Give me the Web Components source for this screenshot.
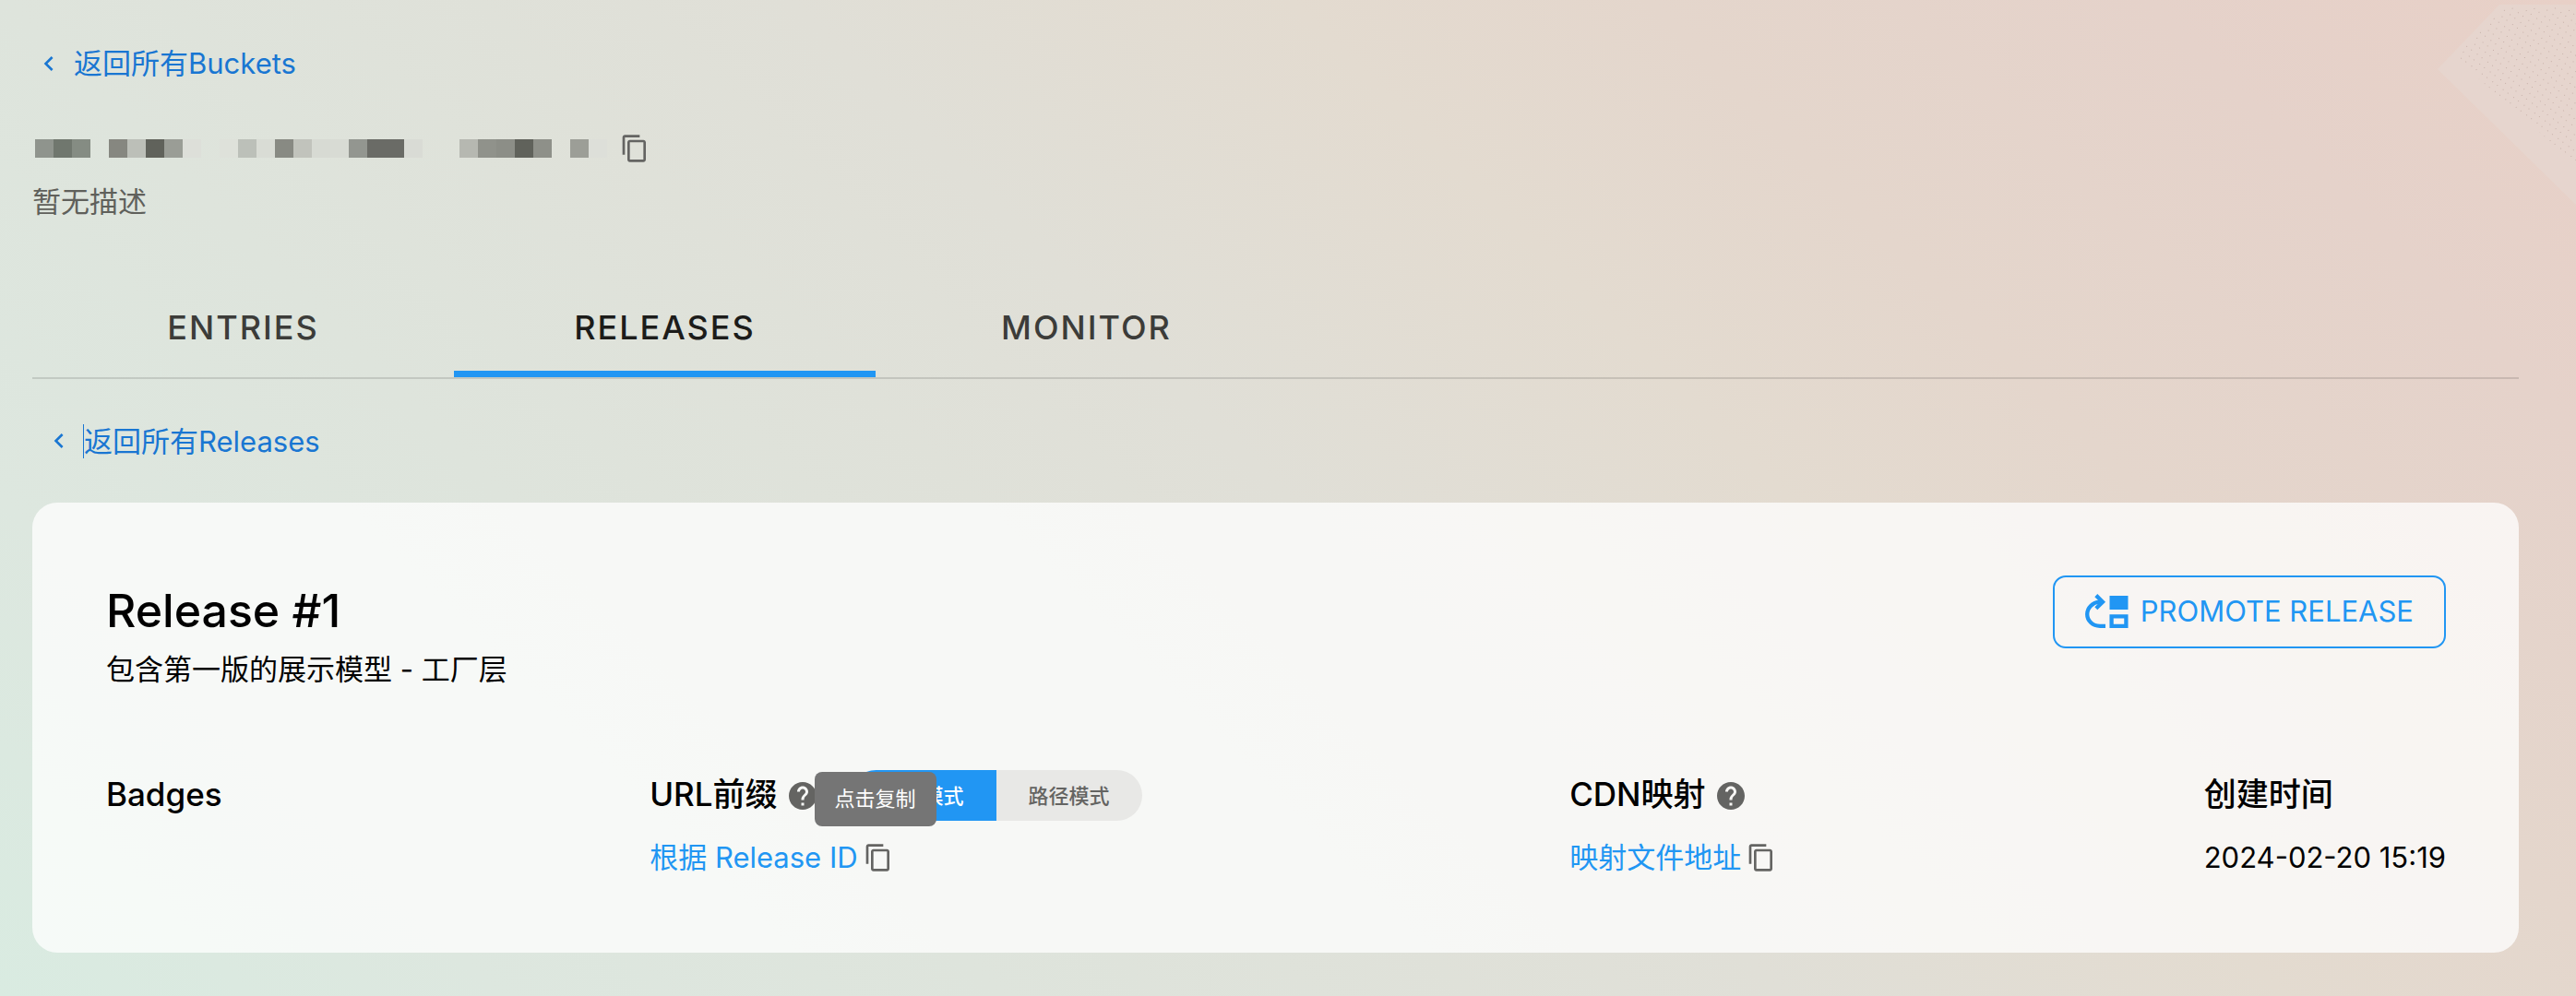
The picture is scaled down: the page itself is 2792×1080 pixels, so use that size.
<!DOCTYPE html>
<html lang="zh-CN">
<head>
<meta charset="utf-8">
<meta name="viewport" content="width=device-width, initial-scale=1">
<title>Release #1</title>
<style>
  html { min-height: 100%; background: #dfe2da; }
  body {
    margin: 0;
    font-family: Inter, "Noto Sans CJK SC", sans-serif;
    font-size: 31px;
    line-height: 44px;
    color: #000;
  }
</style>
</head>
<body>
<release-page></release-page>

<script>
const html = (markup) => {
  const template = document.createElement('template');
  template.innerHTML = markup;
  return template;
};

class BaseElement extends HTMLElement {
  constructor() {
    super();
    this.attachShadow({ mode: 'open' });
    this.shadowRoot.appendChild(this.constructor.template.content.cloneNode(true));
  }
}

class BackLink extends BaseElement {
  static template = html(`
    <style>
      :host { display: flex; }
      a {
        display: flex;
        align-items: center;
        gap: 11px;
        height: 48px;
        padding-left: 2px;
        color: #1976d2;
        text-decoration: none;
      }
      svg { width: 32px; height: 32px; fill: currentColor; }
      :host([focused]) .label { box-shadow: -1px 0 0 #1976d2; line-height: 37px; }
    </style>
    <a href="#">
      <svg viewBox="0 0 24 24" aria-hidden="true"><path d="M15.41 7.41 14 6l-6 6 6 6 1.41-1.41L10.83 12z"/></svg>
      <span class="label"><slot></slot></span>
    </a>
  `);
}

class CopyButton extends BaseElement {
  static template = html(`
    <style>
      :host { display: flex; position: relative; }
      button {
        display: flex;
        padding: 0 0 0 6px;
        border: 0;
        background: none;
        color: #646462;
        cursor: pointer;
      }
      svg { width: 32px; height: 32px; fill: currentColor; }
      .tip {
        display: none;
        position: absolute;
        bottom: calc(100% + 18px);
        left: 50%;
        transform: translateX(-50%);
        padding: 8px 22px;
        border-radius: 8px;
        background: #757575;
        color: #fff;
        font-size: 22px;
        line-height: 43px;
        white-space: nowrap;
      }
      :host([open]) .tip { display: block; }
    </style>
    <button type="button" aria-label="copy">
      <svg viewBox="0 0 24 24" aria-hidden="true"><path d="M16 1H4c-1.1 0-2 .9-2 2v14h2V3h12V1zm3 4H8c-1.1 0-2 .9-2 2v14c0 1.1.9 2 2 2h11c1.1 0 2-.9 2-2V7c0-1.1-.9-2-2-2zm0 16H8V7h11v14z"/></svg>
    </button>
    <span class="tip" role="tooltip"><slot></slot></span>
  `);
}

class HelpIcon extends BaseElement {
  static template = html(`
    <style>
      :host { display: flex; }
      svg { width: 36px; height: 36px; fill: #646462; }
    </style>
    <svg viewBox="0 0 24 24" aria-hidden="true"><path d="M12 2C6.48 2 2 6.48 2 12s4.48 10 10 10 10-4.48 10-10S17.52 2 12 2zm1 17h-2v-2h2v2zm2.07-7.75-.9.92C13.45 12.9 13 13.5 13 15h-2v-.5c0-1.1.45-2.1 1.17-2.83l1.24-1.26c.37-.36.59-.86.59-1.41 0-1.1-.9-2-2-2s-2 .9-2 2H8c0-2.21 1.79-4 4-4s4 1.79 4 4c0 .88-.36 1.68-.93 2.25z"/></svg>
  `);
}

// Bucket name with its characters pixelated; "-" leaves a cell empty
class MaskedName extends BaseElement {
  static template = html(`
    <style>
      :host { display: flex; height: 20px; }
      i { width: 20px; }
    </style>
  `);

  connectedCallback() {
    const cells = '#8f948d #70776e #858c83 - #868780 #bcbfb8 #60625b #9a9d96 #dddfd9 - #dee1da #bcc0b9 #d9dcd5 #888a83 #c1c3bc #d7dad3 #d8dbd4 #939690 #6a6b66 #6a6b66 #d9dbd5 - - #b6b8b1 #90928b #8c8e87 #60625b #8e9089 - #9c9e97 #dddfd9';
    cells.split(' ').forEach((color) => {
      const cell = document.createElement('i');
      if (color !== '-') cell.style.background = color;
      this.shadowRoot.appendChild(cell);
    });
  }
}

class TabBar extends BaseElement {
  static template = html(`
    <style>
      :host { display: flex; border-bottom: 2px solid rgba(0, 0, 0, 0.12); }
      ::slotted(button) {
        width: 457px;
        height: 107px;
        padding: 0 0 2px;
        border: 0;
        background: none;
        color: #3c3c39;
        font: 500 36px Inter, sans-serif;
        letter-spacing: 2px;
        cursor: pointer;
      }
      ::slotted(button[aria-selected="true"]) {
        color: #1c1c1a;
        box-shadow: inset 0 -7px #2196f3;
      }
    </style>
    <slot></slot>
  `);

  connectedCallback() {
    this.setAttribute('role', 'tablist');
    this.addEventListener('click', (e) => {
      const tab = e.target.closest('button');
      if (!tab) return;
      this.querySelectorAll('button').forEach((b) => b.setAttribute('aria-selected', b === tab));
    });
  }
}

class ModeSwitch extends BaseElement {
  static template = html(`
    <style>
      :host { display: flex; border-radius: 28px; overflow: hidden; }
      ::slotted(button) {
        width: 158px;
        height: 55px;
        padding: 0 35px 3px;
        border: 0;
        background: #e8e8e6;
        color: #646462;
        font: 500 22px Inter, "Noto Sans CJK SC", sans-serif;
        text-align: right;
        cursor: pointer;
      }
      ::slotted(button[aria-pressed="true"]) { background: #2196f3; color: #fff; }
    </style>
    <slot></slot>
  `);
}

class PromoteButton extends BaseElement {
  static template = html(`
    <style>
      :host { display: flex; }
      button {
        display: flex;
        align-items: center;
        gap: 13px;
        height: 79px;
        padding: 0 33px 2px;
        border: 2px solid #2196f3;
        border-radius: 14px;
        background: none;
        color: #2196f3;
        font: 400 31px Inter, sans-serif;
        cursor: pointer;
      }
      svg { width: 47px; height: 37px; }
    </style>
    <button type="button">
      <svg viewBox="0 0 47 37" fill="none" stroke="currentColor" stroke-width="4.3" aria-hidden="true">
        <path d="M22 34.8H16C8 34.8 2.2 29 2.2 22S8 9.2 15.5 8.7H19"/>
        <path d="m11.8 1.6 7.2 7.1-7.2 7.1"/>
        <path d="M26.5 2h20v15h-20z" fill="currentColor" stroke="none"/>
        <path d="M28.6 24.4h15.8v10.4H28.6z"/>
      </svg>
      <slot></slot>
    </button>
  `);
}

class InfoColumn extends BaseElement {
  static template = html(`
    <style>
      :host { display: flex; flex-direction: column; gap: 18px; }
      .heading {
        display: flex;
        align-items: center;
        gap: 9px;
        min-height: 55px;
        font-size: 35px;
        font-weight: 500;
      }
      .value { display: flex; align-items: center; min-height: 44px; }
      ::slotted(span) { padding-bottom: 3px; }
      ::slotted(a) { color: #2196f3; text-decoration: none; }
      ::slotted(mode-switch) { margin-left: 25px; }
    </style>
    <div class="heading"><slot name="heading"></slot></div>
    <div class="value"><slot></slot></div>
  `);
}

class ReleaseCard extends BaseElement {
  static template = html(`
    <style>
      :host {
        display: block;
        padding: 79px 79px 81px 80px;
        border-radius: 27px;
        background: rgba(255, 255, 255, 0.75);
      }
      header { display: flex; justify-content: space-between; align-items: flex-start; }
      .title { display: flex; flex-direction: column; gap: 12px; padding-top: 8px; }
      .details { display: flex; justify-content: space-between; margin-top: 87px; }
      ::slotted(h1) { margin: 0; font-size: 50px; font-weight: 500; line-height: 60px; }
      ::slotted(p) { margin: 0; }
    </style>
    <header>
      <div class="title"><slot name="title"></slot></div>
      <slot name="action"></slot>
    </header>
    <div class="details"><slot></slot></div>
  `);
}

class ReleasePage extends BaseElement {
  static template = html(`
    <style>
      :host {
        display: flex;
        flex-direction: column;
        position: relative;
        box-sizing: border-box;
        min-height: 100vh;
        padding: 45px 62px 46px 35px;
        background: linear-gradient(45deg, #d9ebe1, #dde7df 14%, #dee4dc 28%, #e0dfd7 50%, #e3dbd0 64%, #e4d6cc 74%, #e5d2ca 88%, #e8d0c7);
      }
      .grain { position: absolute; top: 0; right: 0; width: 150px; height: 222px; pointer-events: none; }
      .name { display: flex; align-items: center; gap: 8px; margin-top: 52px; padding-left: 3px; }
      .desc { margin: 20px 0 61px; color: #5f605b; }
      .releases-link { margin: 43px 0; padding-left: 11px; }
    </style>
    <svg class="grain" viewBox="0 0 150 222" aria-hidden="true">
      <defs>
        <pattern id="dots" width="9" height="11" patternUnits="userSpaceOnUse" patternTransform="rotate(-14)">
          <path d="M0 1h1v1H0zM4 6h1v1H4z" fill="#bfa8a0"/>
        </pattern>
      </defs>
      <path d="M0 75 67 5h83v217z" fill="#e5d7d0" opacity="0.7"/>
      <path d="M18 62 72 8h78v170z" fill="url(#dots)" opacity="0.8"/>
    </svg>
    <back-link>返回所有Buckets</back-link>
    <div class="name">
      <masked-name></masked-name>
      <copy-button></copy-button>
    </div>
    <p class="desc">暂无描述</p>
    <tab-bar>
      <button type="button" role="tab" aria-selected="false">ENTRIES</button>
      <button type="button" role="tab" aria-selected="true">RELEASES</button>
      <button type="button" role="tab" aria-selected="false">MONITOR</button>
    </tab-bar>
    <back-link class="releases-link" focused>返回所有Releases</back-link>
    <release-card>
      <h1 slot="title">Release #1</h1>
      <p slot="title">包含第一版的展示模型 - 工厂层</p>
      <promote-button slot="action">PROMOTE RELEASE</promote-button>
      <info-column>
        <span slot="heading">Badges</span>
      </info-column>
      <info-column>
        <span slot="heading">URL前缀</span>
        <help-icon slot="heading"></help-icon>
        <mode-switch slot="heading">
          <button type="button" aria-pressed="true">模式</button>
          <button type="button" aria-pressed="false">路径模式</button>
        </mode-switch>
        <a href="#">根据 Release ID</a>
        <copy-button open>点击复制</copy-button>
      </info-column>
      <info-column>
        <span slot="heading">CDN映射</span>
        <help-icon slot="heading"></help-icon>
        <a href="#">映射文件地址</a>
        <copy-button></copy-button>
      </info-column>
      <info-column>
        <span slot="heading">创建时间</span>
        <time datetime="2024-02-20T15:19">2024-02-20 15:19</time>
      </info-column>
    </release-card>
  `);
}

customElements.define('back-link', BackLink);
customElements.define('copy-button', CopyButton);
customElements.define('help-icon', HelpIcon);
customElements.define('masked-name', MaskedName);
customElements.define('tab-bar', TabBar);
customElements.define('mode-switch', ModeSwitch);
customElements.define('promote-button', PromoteButton);
customElements.define('info-column', InfoColumn);
customElements.define('release-card', ReleaseCard);
customElements.define('release-page', ReleasePage);
</script>
</body>
</html>
